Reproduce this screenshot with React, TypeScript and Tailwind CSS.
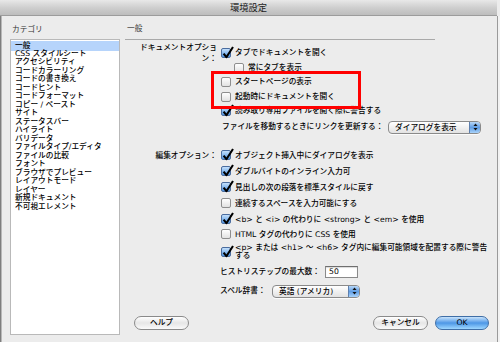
import React from 'react';

const categories = [
  'CSS スタイルシート',
  'アクセシビリティ',
  'コードカラーリング',
  'コードの書き換え',
  'コードヒント',
  'コードフォーマット',
  'コピー / ペースト',
  'サイト',
  'ステータスバー',
  'ハイライト',
  'バリデータ',
  'ファイルタイプ/エディタ',
  'ファイルの比較',
  'フォント',
  'ブラウザでプレビュー',
  'レイアウトモード',
  'レイヤー',
  '新規ドキュメント',
  '不可視エレメント',
];

function Check({ on }: { on?: boolean }) {
  return (
    <span
      className={`relative inline-block w-[10px] h-[10px] shrink-0 rounded-[2px] border ${
        on
          ? 'border-[#4a6c9e] bg-gradient-to-b from-[#c4e0fb] to-[#4f95e2]'
          : 'border-[#8e8e8e] bg-gradient-to-b from-white to-[#e2e2e2]'
      }`}
    >
      {on && (
        <svg className="absolute left-[0px] top-[-3px] w-[12px] h-[13px]" viewBox="0 0 12 13">
          <path d="M1.6 7.6 L4.4 11.2 L11 1" fill="none" stroke="#000" strokeWidth="2.1" strokeLinejoin="round" />
        </svg>
      )}
    </span>
  );
}

function Stepper() {
  return (
    <span className="flex w-[11px] shrink-0 items-center justify-center border-l border-[#5d7fae] bg-gradient-to-b from-[#b7d7f7] via-[#5f9de4] to-[#a9d3fa]">
      <svg width="5" height="8" viewBox="0 0 5 8">
        <path d="M2.5 0.5 L4.5 3 L0.5 3 Z" fill="#111" />
        <path d="M2.5 7.5 L4.5 5 L0.5 5 Z" fill="#111" />
      </svg>
    </span>
  );
}

function Popup({ label, className }: { label: string; className: string }) {
  return (
    <div
      className={`flex h-[13px] overflow-hidden rounded-[4px] border border-[#8a8a8a] bg-gradient-to-b from-white to-[#e2e2e2] shadow-[0_1px_0_rgba(255,255,255,0.8)] ${className}`}
    >
      <span className="flex-1 pl-[6px] leading-[11px]">{label}</span>
      <Stepper />
    </div>
  );
}

function Row({
  label,
  on,
  text,
  indent,
  h,
}: {
  label?: string;
  on?: boolean;
  text: React.ReactNode;
  indent?: boolean;
  h: string;
}) {
  return (
    <div className={`flex items-center ${h}`}>
      <div className="w-[92px] text-right">{label}</div>
      <div className={`flex items-center gap-[4px] ${indent ? 'ml-[17px]' : 'ml-[4px]'}`}>
        <Check on={on} />
        <span className="whitespace-nowrap">{text}</span>
      </div>
    </div>
  );
}

function Button({ label, primary, className }: { label: string; primary?: boolean; className: string }) {
  return (
    <div
      className={`flex h-[14px] items-center justify-center rounded-full border ${
        primary
          ? 'border-[#3f6ea6] bg-gradient-to-b from-[#c8e3fb] via-[#4d97e6] to-[#9ed7ff]'
          : 'border-[#8a8a8a] bg-gradient-to-b from-white via-[#e6e6e6] to-[#fafafa]'
      } ${className}`}
    >
      {label}
    </div>
  );
}

export default function App() {
  return (
    <div className="relative flex h-[342px] w-[500px] flex-col overflow-hidden bg-[#ececec] text-[7.7px] font-medium text-black font-['DejaVu_Sans','Noto_Sans_CJK_JP',sans-serif]">
      {/* title bar */}
      <div className="mr-[3px] flex h-[16px] shrink-0 items-center justify-center border-b border-[#9c9c9c] bg-gradient-to-b from-[#e8e8e8] via-[#cfcfcf] to-[#bdbdbd] text-[9.3px] font-normal text-[#222]">
        環境設定
      </div>

      <div className="flex flex-1">
        <div className="w-px bg-[#7e7e7e]" />
        <div className="w-px bg-[#b8b8b8]" />

        {/* category list */}
        <div className="ml-[8px] flex w-[110px] flex-col">
          <div className="mt-[9px] pl-[2px] font-normal leading-[10px] text-[#333]">カテゴリ</div>
          <div className="mt-[4px] h-[296px] border border-[#b9b9b9] bg-white pt-px">
            <div className="-mb-[1.25px] bg-[#b6d4fb] py-[0.75px] pl-[4px] leading-[8.5px]">一般</div>
            {categories.map((c) => (
              <div key={c} className="whitespace-nowrap pl-[4px] leading-[8.5px]">
                {c}
              </div>
            ))}
          </div>
        </div>

        {/* general panel */}
        <div className="ml-[5px] flex flex-1 flex-col">
          <div className="mt-[8px] pl-[2px] font-normal leading-[10px] text-[#333]">一般</div>
          <div className="mt-[5px] h-px w-[310px] bg-[#a9a9a9]" />

          <div className="mt-[6px]">
            <Row h="h-[14.5px]" label="ドキュメントオプション：" on text="タブでドキュメントを開く" />
            <Row h="h-[14.5px]" indent text="常にタブを表示" />
            <Row h="h-[14.5px]" text="スタートページの表示" />
            <Row h="h-[14.5px]" text="起動時にドキュメントを開く" />
            <Row h="h-[14.5px]" on text="読み取り専用ファイルを開く際に警告する" />
            <div className="flex h-[17px] items-center">
              <div className="ml-[97px] flex w-[259px] items-center justify-between">
                <span className="whitespace-nowrap">ファイルを移動するときにリンクを更新する：</span>
                <Popup label="ダイアログを表示" className="w-[93px]" />
              </div>
            </div>
          </div>

          <div className="mt-[12px]">
            <Row h="h-[16px]" label="編集オプション：" on text="オブジェクト挿入中にダイアログを表示" />
            <Row h="h-[16px]" on text="ダブルバイトのインライン入力可" />
            <Row h="h-[16px]" on text="見出しの次の段落を標準スタイルに戻す" />
            <Row h="h-[16px]" text="連続するスペースを入力可能にする" />
            <Row h="h-[16px]" on text="<b> と <i> の代わりに <strong> と <em> を使用" />
            <Row h="h-[14px]" text="HTML タグの代わりに CSS を使用" />
            <div className="flex items-start pt-[2px]">
              <div className="ml-[96px] mt-[3.5px]">
                <Check on />
              </div>
              <div className="ml-[4px] leading-[8.5px]">
                <div className="whitespace-nowrap">&lt;p&gt; または &lt;h1&gt; 〜 &lt;h6&gt; タグ内に編集可能領域を配置する際に警告</div>
                <div>する</div>
              </div>
            </div>
          </div>

          <div className="mt-[4px] flex h-[15px] items-center">
            <div className="ml-[95px] flex w-[138px] items-center justify-between">
              <span className="whitespace-nowrap">ヒストリステップの最大数：</span>
              <div className="flex h-[12px] w-[33px] items-center border border-[#8a8a8a] border-t-[#6f6f6f] bg-white pl-[3px] shadow-[inset_0_1px_1px_rgba(0,0,0,0.15)]">
                50
              </div>
            </div>
          </div>

          <div className="mt-[4.5px] flex h-[14px] items-center">
            <div className="ml-[95px] flex w-[140px] items-center justify-between">
              <span className="whitespace-nowrap">スペル辞書：</span>
              <Popup label="英語 (アメリカ)" className="w-[88px]" />
            </div>
          </div>

          <div className="mt-[18px] flex items-center pr-[8px]">
            <Button label="ヘルプ" className="ml-[9px] w-[55px]" />
            <div className="ml-auto flex gap-[7px]">
              <Button label="キャンセル" className="w-[55px]" />
              <Button label="OK" primary className="w-[54px]" />
            </div>
          </div>
        </div>

        <div className="w-px bg-[#9a9a9a]" />
        <div className="w-[2px] bg-[#f2f2f2]" />
      </div>

      {/* red annotation */}
      <div className="absolute left-[211px] top-[71px] h-[38px] w-[150px] border-[3px] border-[#ff0000]" />
    </div>
  );
}
